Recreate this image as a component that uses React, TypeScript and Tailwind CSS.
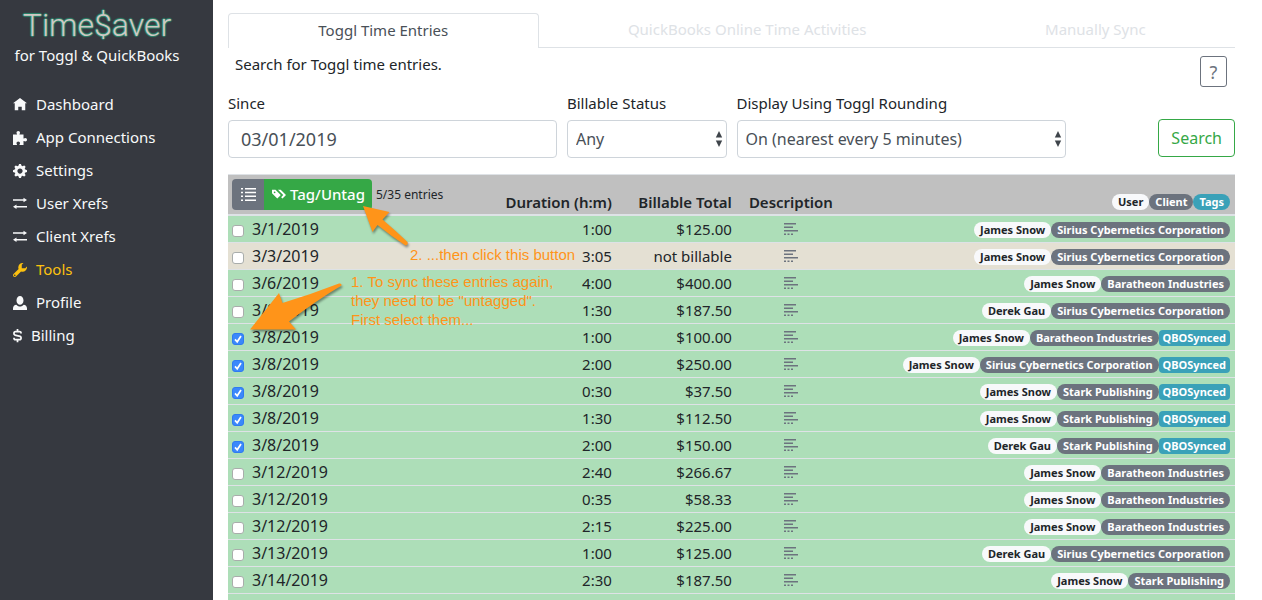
import React from "react";

const ICONS = {
  home: "M4 0l-4 3h1v4h2v-2h2v2h2v-4h1l-4-3z",
  puzzle:
    "M3 0c-.28 0-.54.1-.72.28-.18.18-.28.44-.28.72 0 .28.18.48.28.72.03.06.03.16.03.28h-2.31v6h2.31c0-.12-.01-.22-.03-.28-.1-.24-.28-.44-.28-.72 0-.28.1-.54.28-.72.18-.18.44-.28.72-.28.28 0 .54.1.72.28.18.18.28.44.28.72 0 .28-.18.48-.28.72-.03.06-.03.16-.03.28h2.31v-2.31c.12 0 .22.01.28.03.24.1.44.28.72.28.28 0 .54-.1.72-.28.18-.18.28-.44.28-.72 0-.28-.1-.54-.28-.72-.18-.18-.44-.28-.72-.28-.28 0-.48.18-.72.28-.06.03-.16.03-.28.03v-2.31h-2.31c0-.12 0-.22.03-.28.1-.24.28-.44.28-.72 0-.28-.1-.54-.28-.72-.18-.18-.44-.28-.72-.28z",
  cog: "M3.5 0l-.5 1.19c-.1.03-.19.08-.28.13l-1.19-.5-.72.72.5 1.19c-.05.1-.09.18-.13.28l-1.19.5v1l1.19.5c.04.1.08.18.13.28l-.5 1.19.72.72 1.19-.5c.09.04.18.09.28.13l.5 1.19h1l.5-1.19c.09-.04.19-.08.28-.13l1.19.5.72-.72-.5-1.19c.04-.09.09-.19.13-.28l1.19-.5v-1l-1.19-.5c-.03-.09-.08-.19-.13-.28l.5-1.19-.72-.72-1.19.5c-.09-.04-.19-.09-.28-.13l-.5-1.19h-1zm.5 2.5c.83 0 1.5.67 1.5 1.5s-.67 1.5-1.5 1.5-1.5-.67-1.5-1.5.67-1.5 1.5-1.5z",
  transfer: "M6 .4v.85h-6v.9h6v.85l2-1.3zM2 4.3l-2 1.3 2 1.3v-.85h6v-.9h-6z",
  wrench:
    "M5.5 0c-1.38 0-2.5 1.12-2.5 2.5 0 .32.08.62.19.91l-2.91 2.88c-.39.39-.39 1.05 0 1.44.2.2.46.28.72.28.26 0 .52-.09.72-.28l2.88-2.91c.28.11.58.19.91.19 1.38 0 2.5-1.12 2.5-2.5 0-.16 0-.32-.03-.47l-.97.97h-2v-2l.97-.97c-.15-.03-.31-.03-.47-.03zm-4.5 6.5c.28 0 .5.22.5.5s-.22.5-.5.5-.5-.22-.5-.5.22-.5.5-.5z",
  person:
    "M4 0c-1.1 0-2 1.12-2 2.5s.9 2.5 2 2.5 2-1.12 2-2.5-.9-2.5-2-2.5zm-2.09 5c-1.06.05-1.91.92-1.91 2v1h8v-1c0-1.08-.84-1.95-1.91-2-.54.61-1.28 1-2.09 1-.81 0-1.55-.39-2.09-1z",
  dollar:
    "M2 0v1h-.75c-.66 0-1.25.59-1.25 1.25v.5c0 .54.41 1.09.94 1.22l2.91.72c.07.02.16.12.16.19v.5c0 .14-.11.25-.25.25h-2.5c-.14 0-.25-.1-.25-.19v-.44h-1v.44c0 .7.57 1.19 1.25 1.19h.75v1h1v-1h.75c.69 0 1.25-.57 1.25-1.25v-.5c0-.54-.41-1.1-.94-1.22l-2.91-.72c-.07-.02-.16-.12-.16-.19v-.5c0-.14.11-.25.25-.25h2.5c.14 0 .25.1.25.19v.31h1v-.31c0-.66-.57-1.19-1.25-1.19h-.75v-1h-1z",
  tags: "M0 1v2l3 3 1.5-1.5.5-.5-2-2-1-1h-2zm3.41 0l3 3-1.19 1.22.78.78 2-2-3-3h-1.59zm-1.91 1c.28 0 .5.22.5.5s-.22.5-.5.5-.5-.22-.5-.5.22-.5.5-.5z",
};

function Icon({ name, className }: { name: keyof typeof ICONS; className: string }) {
  return (
    <svg viewBox={name === "dollar" ? "0 0 5 8" : "0 0 8 8"} className={className} fill="currentColor" aria-hidden="true">
      <path d={ICONS[name]} />
    </svg>
  );
}

const NAV: { icon: keyof typeof ICONS; label: string; active?: boolean }[] = [
  { icon: "home", label: "Dashboard" },
  { icon: "puzzle", label: "App Connections" },
  { icon: "cog", label: "Settings" },
  { icon: "transfer", label: "User Xrefs" },
  { icon: "transfer", label: "Client Xrefs" },
  { icon: "wrench", label: "Tools", active: true },
  { icon: "person", label: "Profile" },
  { icon: "dollar", label: "Billing" },
];

type Entry = { date: string; duration: string; total: string; user: string; client: string; synced?: boolean };

const SIRIUS = "Sirius Cybernetics Corporation";
const BARATHEON = "Baratheon Industries";
const STARK = "Stark Publishing";

const ENTRIES: Entry[] = [
  { date: "3/1/2019", duration: "1:00", total: "$125.00", user: "James Snow", client: SIRIUS },
  { date: "3/3/2019", duration: "3:05", total: "not billable", user: "James Snow", client: SIRIUS },
  { date: "3/6/2019", duration: "4:00", total: "$400.00", user: "James Snow", client: BARATHEON },
  { date: "3/8/2019", duration: "1:30", total: "$187.50", user: "Derek Gau", client: SIRIUS },
  { date: "3/8/2019", duration: "1:00", total: "$100.00", user: "James Snow", client: BARATHEON, synced: true },
  { date: "3/8/2019", duration: "2:00", total: "$250.00", user: "James Snow", client: SIRIUS, synced: true },
  { date: "3/8/2019", duration: "0:30", total: "$37.50", user: "James Snow", client: STARK, synced: true },
  { date: "3/8/2019", duration: "1:30", total: "$112.50", user: "James Snow", client: STARK, synced: true },
  { date: "3/8/2019", duration: "2:00", total: "$150.00", user: "Derek Gau", client: STARK, synced: true },
  { date: "3/12/2019", duration: "2:40", total: "$266.67", user: "James Snow", client: BARATHEON },
  { date: "3/12/2019", duration: "0:35", total: "$58.33", user: "James Snow", client: BARATHEON },
  { date: "3/12/2019", duration: "2:15", total: "$225.00", user: "James Snow", client: BARATHEON },
  { date: "3/13/2019", duration: "1:00", total: "$125.00", user: "Derek Gau", client: SIRIUS },
  { date: "3/14/2019", duration: "2:30", total: "$187.50", user: "James Snow", client: STARK },
];

const BADGE = {
  user: "rounded-full bg-[#f8f9fb] px-[6px] text-[#212529]",
  client: "rounded-full bg-[#6c737e] px-[6px] text-white",
  tagPill: "rounded-full bg-[#3aa1b8] px-[6px] text-white",
  tag: "rounded bg-[#3aa1b8] px-1 text-white",
};

function Badge({ kind, children }: { kind: keyof typeof BADGE; children: React.ReactNode }) {
  return <span className={`block h-4 whitespace-nowrap text-[11px] leading-4 font-bold ${BADGE[kind]}`}>{children}</span>;
}

function Field({ id, label, className, children }: { id: string; label: string; className: string; children: React.ReactNode }) {
  return (
    <div className={className}>
      <label htmlFor={id} className="mb-[6px] block text-[15px] leading-[22px] whitespace-nowrap">
        {label}
      </label>
      {children}
    </div>
  );
}

function Select({ id, value }: { id: string; value: string }) {
  return (
    <div className="grid items-center">
      <select
        id={id}
        className="col-start-1 row-start-1 h-[38px] w-full appearance-none rounded border border-[#ced4da] bg-white pr-6 pl-2 text-base text-[#495057]"
      >
        <option>{value}</option>
      </select>
      <svg viewBox="0 0 8 16" className="pointer-events-none col-start-1 row-start-1 mr-1 h-4 w-2 justify-self-end" fill="#3f454b" aria-hidden="true">
        <path d="M4 0l3.2 6.5H.8zM4 16l3.2-6.5H.8z" />
      </svg>
    </div>
  );
}

function Checkbox({ label, checked }: { label: string; checked?: boolean }) {
  return (
    <span className="mt-1 grid size-3">
      <input
        type="checkbox"
        aria-label={label}
        defaultChecked={checked}
        className="peer col-start-1 row-start-1 size-3 appearance-none rounded-[3px] border border-[#a9adab] bg-white checked:border-[#2e7bf0] checked:bg-[#3b88fb]"
      />
      <svg viewBox="0 0 12 12" className="pointer-events-none invisible col-start-1 row-start-1 size-3 peer-checked:visible" fill="none" stroke="#fff" strokeWidth="1.7" aria-hidden="true">
        <path d="M3 6.4l2.2 2.4L9 3" />
      </svg>
    </span>
  );
}

function Sidebar() {
  return (
    <aside className="w-[213px] shrink-0 bg-[#363940] text-[#f8f9fa]">
      <div className="flex w-[194px] flex-col items-center pt-[6px]">
        <div className="font-['Roboto','Liberation_Sans',sans-serif] text-[32px] leading-[38px] font-light text-[#cfc8c4] [text-shadow:1px_0_1px_#2b8a6e,-1px_0_1px_#2b8a6e,0_1px_1px_#2b8a6e,0_-1px_1px_#2b8a6e]">
          Time$aver
        </div>
        <div className="text-[15px] leading-[22px] whitespace-nowrap">for Toggl &amp; QuickBooks</div>
      </div>
      <nav className="mt-[22px] flex flex-col">
        {NAV.map(({ icon, label, active }) => (
          <a key={label} href="#" className={`flex h-[33px] items-center gap-[9px] pl-[13px] text-[15px] ${active ? "text-[#fcc10f]" : ""}`}>
            <Icon name={icon} className={icon === "dollar" ? "h-[14px] w-[9px]" : "size-[14px]"} />
            {label}
          </a>
        ))}
      </nav>
    </aside>
  );
}

function Annotations() {
  return (
    <div className="pointer-events-none absolute top-0 left-0 font-['Liberation_Sans',Arial,sans-serif] text-[15px] leading-[19px] whitespace-nowrap text-[#ff9419]">
      <svg width="220" height="170" viewBox="228 174 220 170" className="absolute top-0 left-0 drop-shadow-[1px_2px_1px_rgba(0,0,0,0.4)]" fill="#ff9419" aria-hidden="true">
        <path d="M250 329.500L279 293L282.500 303Q312 294 339 283.500Q342 283 341.500 285.500Q317 300 289 321.500L296 329.500Z" />
        <path d="M363 206L389.500 212L382.500 219.500Q396 231 407.500 242Q408.500 245 405.500 245.500Q391 236 377.500 225L372.500 232Z" />
      </svg>
      <p className="absolute top-[71px] left-[182px]">2. ...then click this button</p>
      <p className="absolute top-[98px] left-[123px]">
        1. To sync these entries again,
        <br />
        they need to be "untagged".
        <br />
        First select them...
      </p>
    </div>
  );
}

function EntriesTable() {
  return (
    <div className="relative mt-4">
      <table className="w-full table-fixed border-separate border-spacing-0 text-[#212529]">
        <colgroup>
          <col className="w-[27%]" />
          <col className="w-[117px]" />
          <col className="w-[120px]" />
          <col className="w-[108px]" />
          <col />
        </colgroup>
        <thead>
          <tr className="bg-[#c0c0c0] text-[15px] [&>th]:h-[42px] [&>th]:border-t [&>th]:border-b-2 [&>th]:border-[#dee2e6] [&>th]:p-0">
            <th className="text-left align-middle font-normal">
              <div className="flex items-center pl-1">
                <button type="button" aria-label="Select entries" className="flex h-[31px] w-8 items-center justify-center rounded-l bg-[#6c737e]">
                  <svg viewBox="0 0 15 13" className="h-[13px] w-[15px]" fill="#fff" aria-hidden="true">
                    <path d="M0 0h2v1.500H0zM4 0h11v1.500H4zM0 3.800h2v1.500H0zM4 3.800h11v1.500H4zM0 7.600h2v1.500H0zM4 7.600h11v1.500H4zM0 11.400h2v1.500H0zM4 11.400h11v1.500H4z" />
                  </svg>
                </button>
                <button type="button" className="flex h-[31px] items-center gap-1 rounded-r bg-[#35a846] pr-[7px] pl-2 text-[15px] font-medium whitespace-nowrap text-white">
                  <Icon name="tags" className="size-[14px]" />
                  Tag/Untag
                </button>
                <span className="ml-1 text-[12px] whitespace-nowrap">5/35 entries</span>
              </div>
            </th>
            <th className="text-right align-bottom leading-6 font-semibold whitespace-nowrap">
              <span className="pr-[5px]">Duration (h:m)</span>
            </th>
            <th className="text-right align-bottom leading-6 font-semibold whitespace-nowrap">
              <span className="pr-[5px]">Billable Total</span>
            </th>
            <th className="text-center align-bottom leading-6 font-semibold">Description</th>
            <th className="align-bottom">
              <div className="flex justify-end pr-[5px] pb-1">
                <Badge kind="user">User</Badge>
                <Badge kind="client">Client</Badge>
                <Badge kind="tagPill">Tags</Badge>
              </div>
            </th>
          </tr>
        </thead>
        <tbody>
          {ENTRIES.map((e, i) => (
            <tr
              key={i}
              className={`text-[15px] leading-6 [&>td]:h-[27px] [&>td]:border-b [&>td]:border-[#dee2e6] [&>td]:py-0 ${
                e.total === "not billable" ? "bg-[#e4e0d3]" : "bg-[#addeb8]"
              }`}
            >
              <td className="pl-1 text-base leading-6">
                <div className="flex items-center gap-2">
                  <Checkbox label={`Select entry ${e.date}`} checked={e.synced} />
                  {e.date}
                </div>
              </td>
              <td className="pr-[5px] text-right">{e.duration}</td>
              <td className="pr-[5px] text-right">{e.total}</td>
              <td>
                <svg viewBox="0 0 14 13" className="mx-auto h-[13px] w-[14px]" fill="#6c737e" aria-hidden="true">
                  <path d="M0 0h12v1.500H0zM0 3.500h9V5H0zM0 7h14v1.500H0zM0 10.500h2V12H0zM3.500 10.500h2V12h-2zM7 10.500h2V12H7z" />
                </svg>
              </td>
              <td className="pr-[5px]">
                <div className="flex justify-end pt-[2px]">
                  <Badge kind="user">{e.user}</Badge>
                  <Badge kind="client">{e.client}</Badge>
                  {e.synced && <Badge kind="tag">QBOSynced</Badge>}
                </div>
              </td>
            </tr>
          ))}
          <tr className="bg-[#addeb8]">
            <td colSpan={5} className="h-[27px]" />
          </tr>
        </tbody>
      </table>
      <Annotations />
    </div>
  );
}

export default function App() {
  return (
    <div className="flex h-screen overflow-hidden bg-white font-['Noto_Sans','Open_Sans',sans-serif] text-[#212529]">
      <Sidebar />
      <main className="min-w-0 flex-1 pt-[13px] pr-[27px] pl-[15px]">
        <div role="tablist" className="flex h-[35px] text-[15px] leading-6 [&>button]:pb-[2px]">
          <button type="button" role="tab" aria-selected="true" className="flex-auto rounded-t border border-b-0 border-[#dee2e6] text-[#495057]">
            Toggl Time Entries
          </button>
          <button type="button" role="tab" className="flex-auto border-b border-[#dee2e6] text-[#dee2e6]">
            QuickBooks Online Time Activities
          </button>
          <button type="button" role="tab" className="flex-auto border-b border-[#dee2e6] text-[#dee2e6]">
            Manually Sync
          </button>
        </div>
        <div className="flex h-11 justify-between pr-2 pl-[7px]">
          <p className="pt-1 text-[15px] leading-6">Search for Toggl time entries.</p>
          <button type="button" className="mt-2 h-[31px] w-[27px] rounded-[3px] border border-[#6c737e] text-lg leading-none text-[#6c737e]">
            ?
          </button>
        </div>
        <form className="grid grid-cols-12 items-end gap-[10px]" onSubmit={(ev) => ev.preventDefault()}>
          <Field id="since" label="Since" className="col-span-4">
            <input id="since" type="text" defaultValue="03/01/2019" className="block h-[38px] w-full rounded border border-[#ced4da] px-3 text-lg text-[#495057]" />
          </Field>
          <Field id="billable" label="Billable Status" className="col-span-2">
            <Select id="billable" value="Any" />
          </Field>
          <Field id="rounding" label="Display Using Toggl Rounding" className="col-span-4">
            <Select id="rounding" value="On (nearest every 5 minutes)" />
          </Field>
          <button type="submit" className="col-span-2 mb-px h-[38px] justify-self-end rounded border border-[#35a846] px-3 text-base text-[#35a846]">
            Search
          </button>
        </form>
        <EntriesTable />
      </main>
    </div>
  );
}
